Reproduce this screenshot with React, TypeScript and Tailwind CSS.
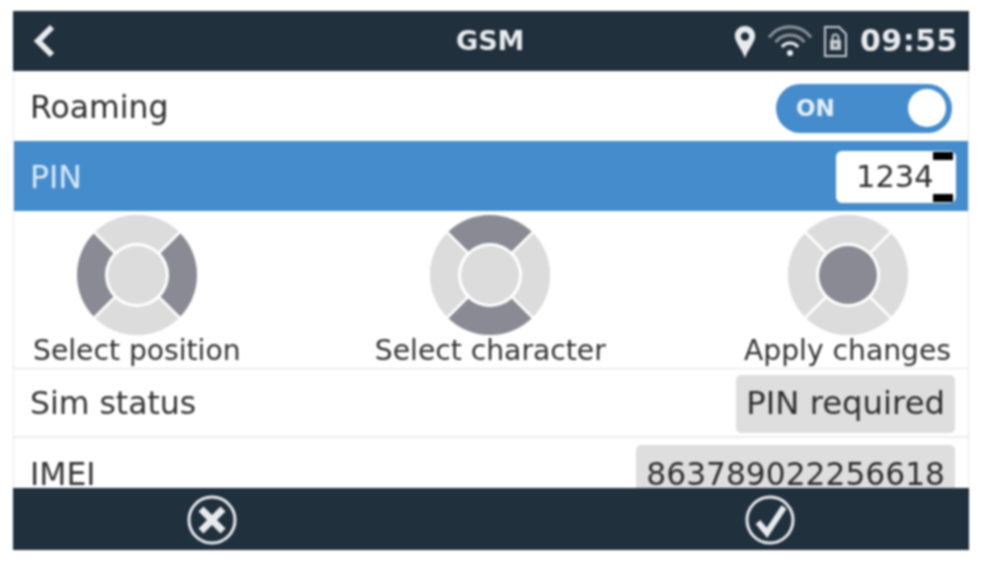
const DARK = "#8a8a94";
const LIGHT = "#dcdcdc";

// one quadrant of the ring, pointing up, rotated into place
const QUADRANT = "M-42.4 -42.4 A60 60 0 0 1 42.4 -42.4 L21.2 -21.2 A30 30 0 0 0 -21.2 -21.2 Z";

function Wheel({ active }: { active: "sides" | "updown" | "center" }) {
  const segments = [
    { rotate: 0, on: active === "updown" },
    { rotate: 90, on: active === "sides" },
    { rotate: 180, on: active === "updown" },
    { rotate: 270, on: active === "sides" },
  ];
  return (
    <svg viewBox="-60 -60 120 120" className="h-[120px] w-[120px]">
      <circle r="60" fill={LIGHT} />
      {segments.map((s) => (
        <path key={s.rotate} d={QUADRANT} transform={`rotate(${s.rotate})`} fill={s.on ? DARK : LIGHT} />
      ))}
      <path d="M-44 -44 L-20 -20 M44 -44 L20 -20 M44 44 L20 20 M-44 44 L-20 20" stroke="#fff" strokeWidth="2.5" />
      <circle r="32" fill="#fff" />
      <circle r="29" fill={active === "center" ? DARK : LIGHT} />
    </svg>
  );
}

function Hint({ label, active, className }: { label: string; active: "sides" | "updown" | "center"; className?: string }) {
  return (
    <div className={`flex flex-col items-center ${className ?? ""}`}>
      <Wheel active={active} />
      <span className="mt-[-1px] text-[28.200px] leading-[34px] text-[#333]">{label}</span>
    </div>
  );
}

export default function App() {
  return (
    <div className="h-[568px] w-[984px] overflow-hidden bg-white pl-[13px] pt-[11px] font-['DejaVu_Sans',sans-serif] blur-[0.8px]">
      <div className="flex h-[539px] w-[956px] flex-col overflow-hidden">
        <header className="flex h-[60px] shrink-0 items-center justify-between bg-[#21303d] pl-[19px] pr-[11px] text-[#e8ebee]">
          <svg viewBox="0 0 24 34" className="h-[34px] w-[24px]" fill="none" stroke="currentColor" strokeWidth="6">
            <path d="M20 3L6 17L20 31" />
          </svg>
          <span className="absolute left-[456px] text-[27px] font-bold">GSM</span>
          <div className="flex items-center">
            <svg viewBox="0 0 24 36" className="h-[33px] w-[24px]">
              <path
                fillRule="evenodd"
                fill="currentColor"
                d="M12 1C5.500 1 1 5.800 1 12c0 7 7.500 14 11 24 3.500-10 11-17 11-24C23 5.800 18.500 1 12 1zm0 7a4.500 4.500 0 1 1 0 9 4.500 4.500 0 0 1 0-9z"
              />
            </svg>
            <svg viewBox="0 0 44 32" className="ml-[11px] h-[32px] w-[44px]" fill="none" stroke="#8b939b" strokeWidth="3">
              <path d="M1 12.400A26 26 0 0 1 43 12.400" />
              <path d="M7.600 17.200A18 18 0 0 1 36.400 17.200" />
              <path d="M14 22A10 10 0 0 1 30 22" stroke="#e8ebee" />
              <circle cx="22" cy="28" r="3" fill="#e8ebee" stroke="none" />
            </svg>
            <svg viewBox="0 0 25 33" className="ml-[11px] h-[33px] w-[25px]" fill="none" stroke="#c4c9ce" strokeWidth="2">
              <path d="M2 2h14l7 7v22H2z" />
              <rect x="7" y="15" width="11" height="10" fill="#c4c9ce" stroke="none" />
              <path d="M9.500 15v-2.500a3 3 0 0 1 6 0v2.500" />
              <circle cx="12.500" cy="20" r="1.500" fill="#21303d" stroke="none" />
            </svg>
            <span className="ml-[12px] text-[30px] font-bold leading-none tracking-[0.5px]">09:55</span>
          </div>
        </header>

        <div className="min-h-0 flex-1 overflow-hidden border-x border-[#e6e6e6]">
          <div className="flex h-[70px] items-center justify-between pl-4 pr-[16px]">
            <span className="mt-[3px] text-[31.500px] text-[#2e2e2e]">Roaming</span>
            <div className="mt-[4px] flex h-[49px] w-[176px] items-center justify-between rounded-full bg-[#458ccc] pl-[20px] pr-[6px]">
              <span className="text-[23px] font-bold text-[#e6f0f8]">ON</span>
              <span className="h-[38px] w-[38px] rounded-full bg-white" />
            </div>
          </div>

          <div className="flex h-[70px] items-center justify-between bg-[#458ccc] pl-4 pr-[12px]">
            <span className="mt-[3px] text-[31.500px] text-[#dbeafa]">PIN</span>
            <div className="relative mt-[2px] flex h-[52px] w-[120px] items-center rounded-[6px] bg-white pl-[20px] text-[30.500px] text-[#2e2e2e]">
              1234
              <span className="absolute right-[3px] top-[1px] h-[8px] w-[20px] bg-black" />
              <span className="absolute bottom-[1px] right-[3px] h-[8px] w-[20px] bg-black" />
            </div>
          </div>

          <div className="flex h-[158px] items-start justify-between border-b border-[#e4e4e4] pl-[19px] pr-[17px] pt-[4px]">
            <Hint label="Select position" active="sides" />
            <Hint label="Select character" active="updown" className="mr-[4px]" />
            <Hint label="Apply changes" active="center" />
          </div>

          <div className="flex h-[69px] items-center justify-between border-b-2 border-[#ececec] pl-4 pr-[13px] pt-[2px]">
            <span className="mt-[1px] text-[31.500px] text-[#333]">Sim status</span>
            <span className="flex h-[58px] items-center rounded-[5px] bg-[#dedede] px-[10px] text-[32.300px] text-[#2e2e2e]">PIN required</span>
          </div>

          <div className="flex items-start justify-between pl-4 pr-[13px] pt-[7px]">
            <span className="pt-[6px] text-[31.500px] text-[#333]">IMEI</span>
            <span className="flex h-[58px] items-center rounded-[5px] bg-[#dedede] px-[10px] text-[31.300px] text-[#2e2e2e]">863789022256618</span>
          </div>
        </div>

        <footer className="flex h-[62px] shrink-0 items-center bg-[#21303d] pt-[2px] text-[#e8ebee]">
          <div className="flex flex-1 justify-center pr-[86px]">
            <svg viewBox="0 0 50 50" className="h-[50px] w-[50px]" fill="none" stroke="currentColor">
              <circle cx="25" cy="25" r="23" strokeWidth="3" />
              <path d="M14 14L36 36M36 14L14 36" strokeWidth="7" />
            </svg>
          </div>
          <div className="flex flex-1 justify-center pl-[74px]">
            <svg viewBox="0 0 50 50" className="h-[50px] w-[50px]" fill="none" stroke="currentColor">
              <circle cx="25" cy="25" r="23" strokeWidth="3" />
              <path d="M13 27L22 38L39 12" strokeWidth="6" />
            </svg>
          </div>
        </footer>
      </div>
    </div>
  );
}
